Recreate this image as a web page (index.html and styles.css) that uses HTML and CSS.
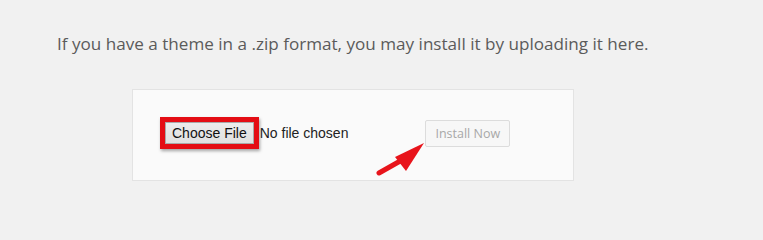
FILE: index.html
```html
<!DOCTYPE html>
<html>
<head>
<meta charset="utf-8">
<link rel="stylesheet" href="styles.css">
</head>
<body>
<div class="page">
  <p class="intro">If you have a theme in a .zip format, you may install it by uploading it here.</p>
  <div class="card">
    <div class="row">
      <span class="highlight"><span class="choose">Choose File</span></span>
      <span class="nofile">No file chosen</span>
      <span class="install">Install Now</span>
    </div>
    <svg class="arrow" width="60" height="45" viewBox="0 0 60 45">
      <line x1="3" y1="35" x2="26" y2="22" stroke="#e8141b" stroke-width="5" stroke-linecap="round"/>
      <polygon points="48,5 19,19 30,33" fill="#e8141b"/>
    </svg>
  </div>
</div>
</body>
</html>
```
FILE: styles.css
```css
html, body {
  margin: 0;
  padding: 0;
  background: #f1f1f1;
}
.page {
  width: 763px;
  height: 219px;
  padding-top: 32px;
  box-sizing: border-box;
}
.intro {
  margin: 0 0 0 57px;
  font-family: "Open Sans", sans-serif;
  font-size: 17.1px;
  line-height: 24px;
  color: #5b5b5b;
}
.card {
  position: relative;
  margin: 33px 0 0 132px;
  width: 442px;
  height: 92px;
  box-sizing: border-box;
  background: #fafafa;
  border: 1px solid #e3e3e3;
}
.row {
  display: flex;
  align-items: center;
  padding: 27px 0 0 27px;
}
.highlight {
  display: inline-flex;
  border: 5px solid #e40d14;
  box-shadow: 1px 2px 3px rgba(0,0,0,0.35);
}
.choose {
  display: inline-block;
  font-family: "Liberation Sans", Arial, sans-serif;
  font-size: 14px;
  line-height: 18px;
  color: #111;
  padding: 1px 6px;
  background: linear-gradient(#ececec, #e1e1e1);
  border: 1px solid #a9a9a9;
}
.nofile {
  font-family: "Liberation Sans", Arial, sans-serif;
  font-size: 14px;
  color: #222;
  margin-left: 1px;
}
.install {
  margin-left: 77px;
  font-family: "Open Sans", sans-serif;
  font-size: 12.5px;
  line-height: 25px;
  color: #a8a8a8;
  padding: 0 9px;
  border: 1px solid #dcdcdc;
  background: #f7f7f7;
  border-radius: 2px;
}
.arrow {
  position: absolute;
  left: 243px;
  top: 48px;
}
```
